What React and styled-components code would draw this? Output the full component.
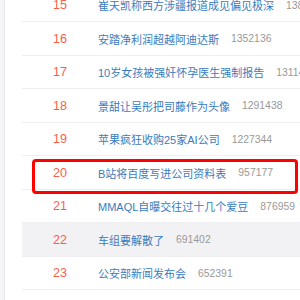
import React from "react"
import styled, { createGlobalStyle } from "styled-components"

const Global = createGlobalStyle`
    html, body {
        margin: 0;
        padding: 0;
        background: #fff;
    }
    body {
        width: 300px;
        height: 300px;
        overflow: hidden;
        font-family: "Liberation Sans", "Noto Sans CJK SC", sans-serif;
    }
`

const Page = styled.div`
    display: flex;
    width: 300px;
    height: 300px;
    overflow: hidden;
    position: relative;
`

const Side = styled.div`
    width: 4px;
    flex: none;
    background: #f4f4f6;
    border-right: 1px solid #e6e6ea;
`

const Board = styled.div`
    flex: 1;
    padding-left: 17px;
`

const List = styled.ul`
    list-style: none;
    margin: -11.2px 0 0 0;
    padding: 0;
`

const Row = styled.li`
    display: flex;
    align-items: center;
    height: 33.5px;
    box-sizing: border-box;
    border-bottom: 1px solid #efeff1;
    background: ${(p) => (p.$hover ? "#f2f2f4" : "transparent")};
    white-space: nowrap;
`

const Rank = styled.span`
    width: 76px;
    flex: none;
    text-align: center;
    color: #f5604e;
    font-size: 12.6px;
`

const Title = styled.span`
    color: #3a7bbd;
    font-size: 11px;
`

const Count = styled.span`
    color: #999;
    font-size: 10.4px;
    margin-left: 12px;
`

const Mark = styled.div`
    position: absolute;
    left: 32px;
    top: 158.5px;
    width: 266px;
    height: 35px;
    box-sizing: border-box;
    border: 3px solid #f00;
    border-radius: 4px;
    pointer-events: none;
`

const items = [
    [15, "崔天凯称西方涉疆报道成见偏见极深", "1384526"],
    [16, "安踏净利润超越阿迪达斯", "1352136"],
    [17, "10岁女孩被强奸怀孕医生强制报告", "1311482"],
    [18, "景甜让吴彤把司藤作为头像", "1291438"],
    [19, "苹果疯狂收购25家AI公司", "1227344"],
    [20, "B站将百度写进公司资料表", "957177"],
    [21, "MMAQL自曝交往过十几个爱豆", "876959"],
    [22, "车组要解散了", "691402"],
    [23, "公安部新闻发布会", "652391"],
]

export default function App() {
    return (
        <Page>
            <Global />
            <Side />
            <Board>
                <List>
                    {items.map(([n, t, c]) => (
                        <Row key={n} $hover={n === 22}>
                            <Rank>{n}</Rank>
                            <Title>{t}</Title>
                            <Count>{c}</Count>
                        </Row>
                    ))}
                </List>
            </Board>
            <Mark />
        </Page>
    )
}
